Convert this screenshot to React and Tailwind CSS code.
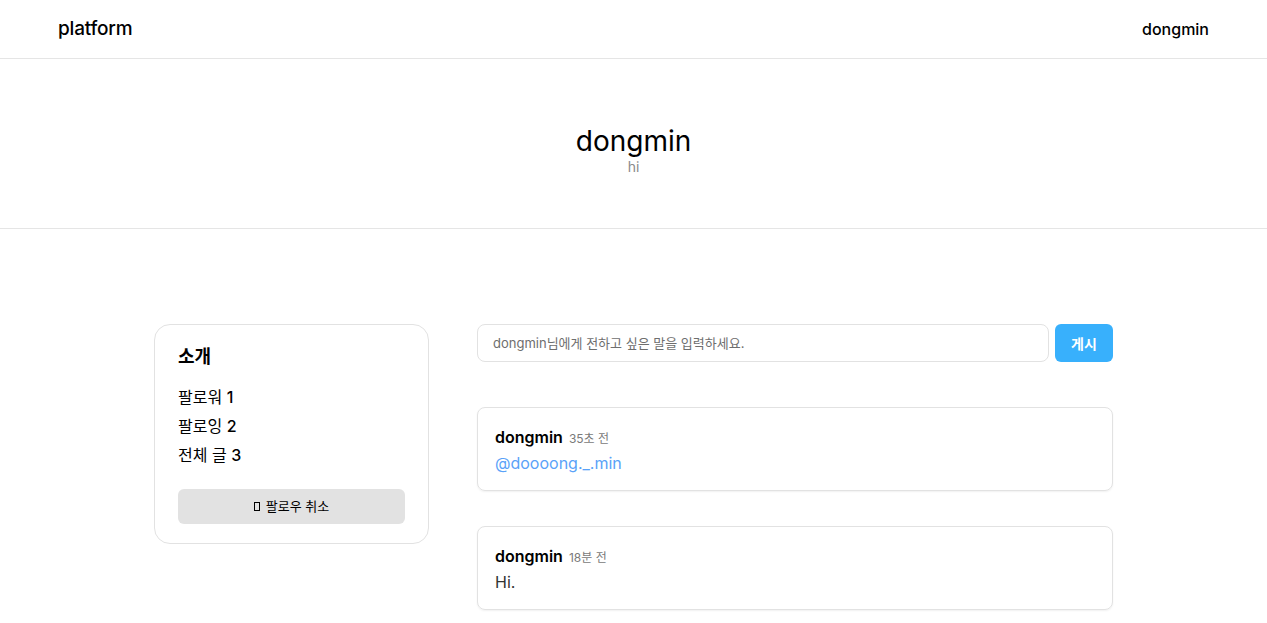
import React, { useState } from 'react';

const posts = [
  { id: 1, author: 'dongmin', time: '35초 전', body: '@doooong._.min', mention: true },
  { id: 2, author: 'dongmin', time: '18분 전', body: 'Hi.', mention: false },
];

const font = { fontFamily: 'Inter, "Noto Sans CJK KR", sans-serif' };

const App = () => {
  const [message, setMessage] = useState('');

  return (
    <div className="min-h-screen bg-white text-black" style={font}>
      <header className="h-[59px] px-[58px] flex justify-between items-center border-b border-[#e5e5e5]">
        <span className="text-[19px] font-medium tracking-[-0.2px]">platform</span>
        <span className="text-[16px] font-medium">dongmin</span>
      </header>

      <section className="h-[170px] flex flex-col items-center justify-center border-b border-[#e5e5e5] pt-[12px]">
        <h1 className="text-[28px] leading-[34px] font-normal">dongmin</h1>
        <p className="text-[14px] leading-[18px] text-[#8a8a8a]">hi</p>
      </section>

      <main className="w-[959px] mx-auto mt-[95px] flex gap-[48px] items-start">
        <aside className="w-[275px] shrink-0 border border-[#e2e2e2] rounded-[16px] px-[23px] pt-[20px] pb-[19px]">
          <h2 className="text-[18px] font-bold leading-[24px]">소개</h2>
          <ul className="mt-[17px] flex flex-col gap-[7px] text-[16px] font-normal leading-[22px]">
            <li>팔로워 <span className="font-medium">1</span></li>
            <li>팔로잉 <span className="font-medium">2</span></li>
            <li>전체 글 <span className="font-medium">3</span></li>
          </ul>
          <button className="mt-[23px] w-full h-[35px] rounded-[6px] bg-[#e2e2e2] flex items-center justify-center gap-[6px] text-[13px]">
            <span className="inline-block w-[6px] h-[9px] border border-black" />
            팔로우 취소
          </button>
        </aside>

        <div className="flex-1 flex flex-col">
          <div className="flex gap-[6px]">
            <input
              value={message}
              onChange={(e) => setMessage(e.target.value)}
              placeholder="dongmin님에게 전하고 싶은 말을 입력하세요."
              className="flex-1 h-[38px] px-[15px] border border-[#e2e2e2] rounded-[8px] text-[13px] placeholder:text-[#6e6e6e] outline-none"
            />
            <button className="w-[58px] h-[38px] rounded-[6px] bg-[#38b0fc] text-white text-[14px] font-bold">
              게시
            </button>
          </div>

          <div className="mt-[45px] flex flex-col gap-[35px]">
            {posts.map((post) => (
              <article
                key={post.id}
                className="h-[84px] border border-[#e2e2e2] rounded-[8px] shadow-[0_1px_2px_rgba(0,0,0,0.06)] px-[17px] pt-[17px]"
              >
                <div className="flex items-baseline gap-[6px]">
                  <span className="text-[16px] font-semibold">{post.author}</span>
                  <span className="text-[12px] text-[#7a7a7a]">{post.time}</span>
                </div>
                <p className={`mt-[2px] text-[16px] ${post.mention ? 'text-[#5aa2f8]' : 'text-[#333]'}`}>
                  {post.body}
                </p>
              </article>
            ))}
          </div>
        </div>
      </main>
    </div>
  );
};

export default App;
